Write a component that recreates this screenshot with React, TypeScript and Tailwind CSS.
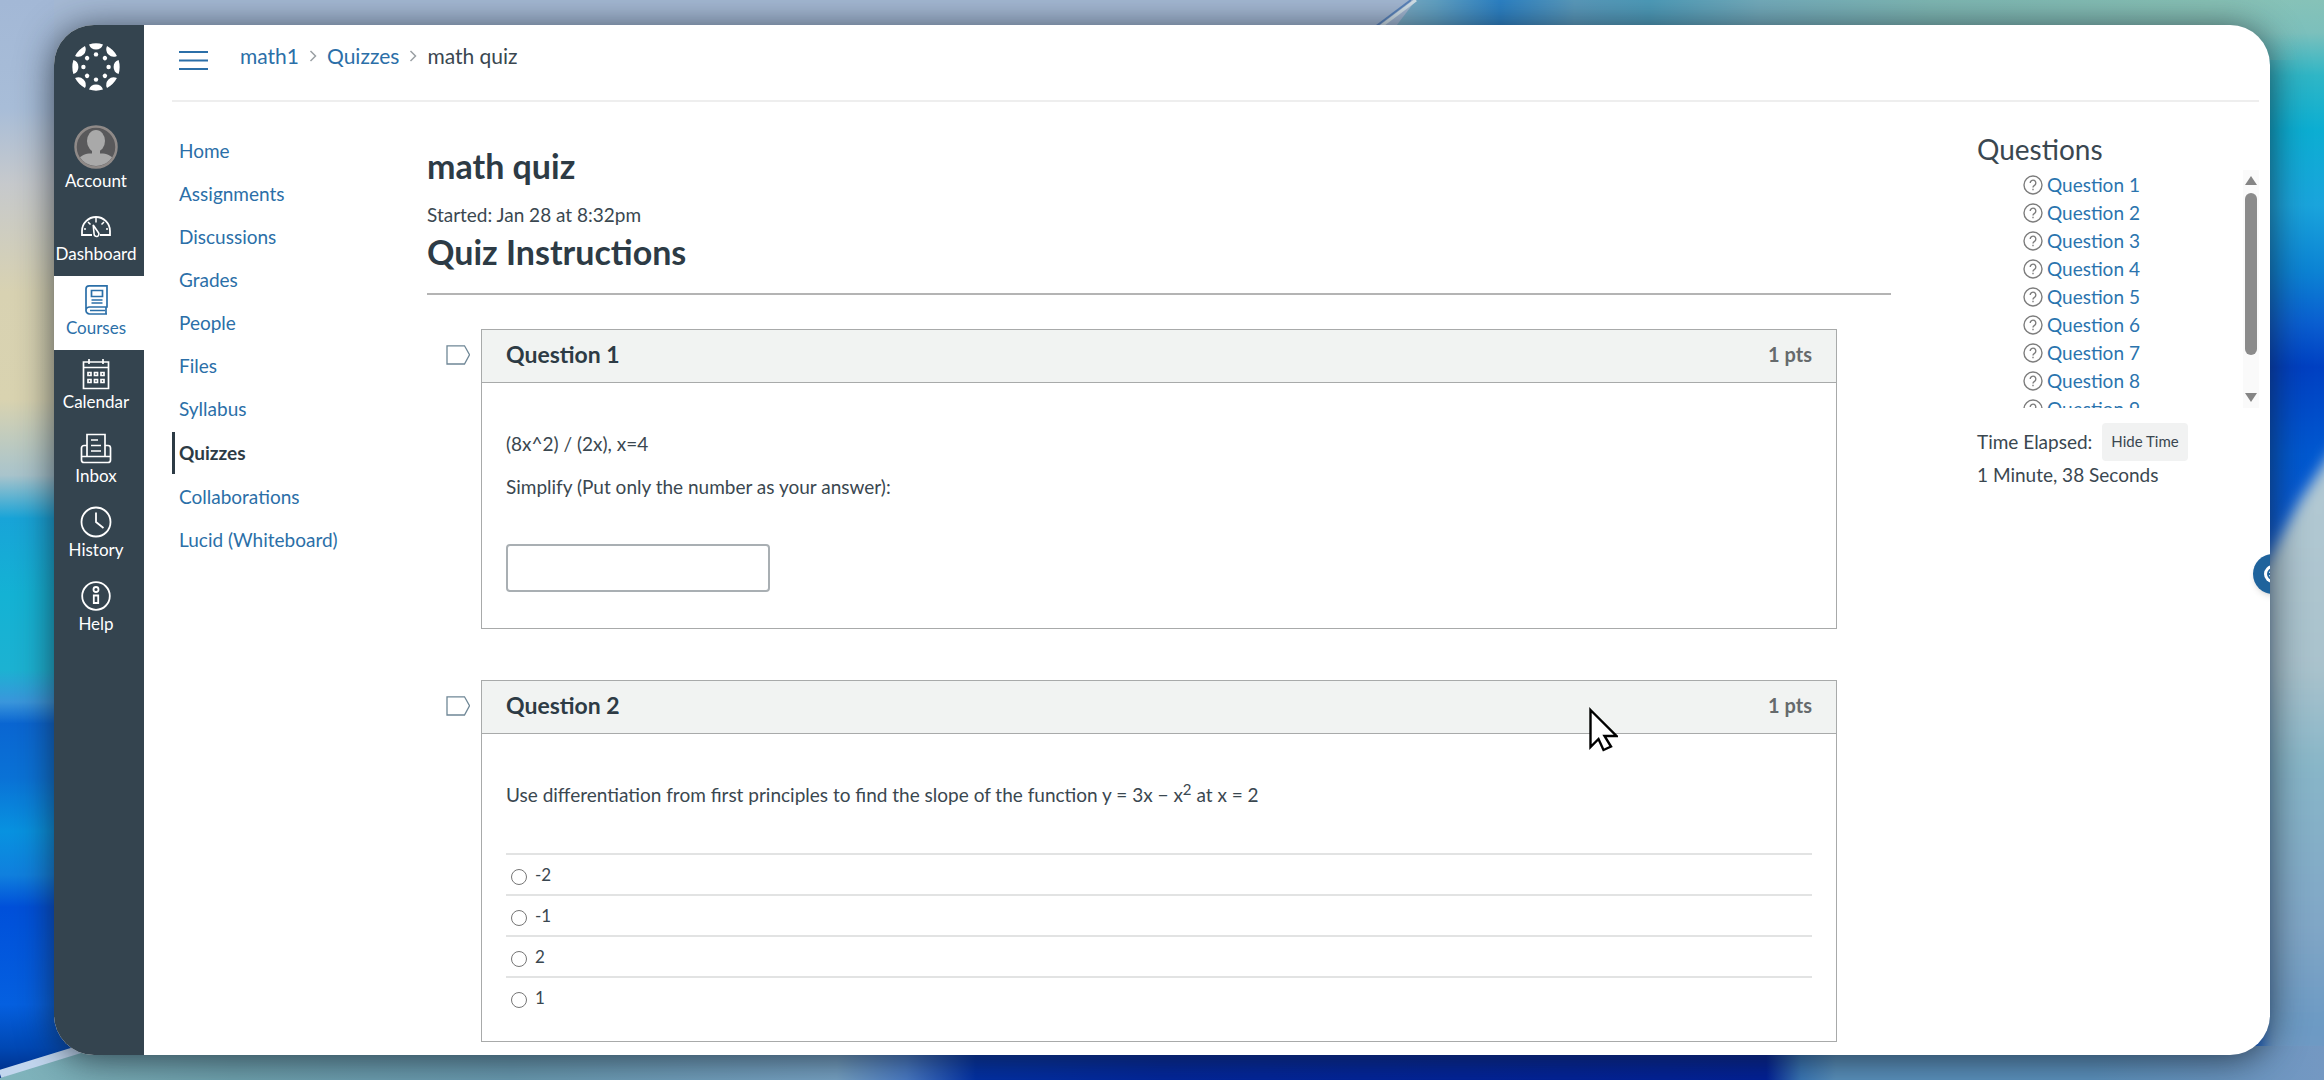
import React, { useState } from 'react';

const courseLinks = [
  'Home',
  'Assignments',
  'Discussions',
  'Grades',
  'People',
  'Files',
  'Syllabus',
  'Quizzes',
  'Collaborations',
  'Lucid (Whiteboard)',
];

const answers = ['-2', '-1', '2', '1'];

const CanvasLogo = () => (
  <svg viewBox="-24 -24 48 48" className="h-12 w-12" fill="#fff" aria-hidden="true">
    {[0, 45, 90, 135, 180, 225, 270, 315].map((angle) => (
      <g key={angle} transform={`rotate(${angle})`}>
        <path d="M-7 -22.6A24 24 0 0 1 7 -22.6A7.4 7.4 0 0 1 -7 -22.6Z" />
        <circle cy="-12.6" r="2.2" />
      </g>
    ))}
  </svg>
);

const AvatarIcon = () => (
  <svg viewBox="0 0 44 44" className="h-11 w-11" aria-hidden="true">
    <clipPath id="avatar-clip">
      <circle cx="22" cy="22" r="19" />
    </clipPath>
    <circle cx="22" cy="22" r="20.5" fill="#59595b" stroke="#8f8a88" strokeWidth="2.5" />
    <g fill="#a9a9a9" clipPath="url(#avatar-clip)">
      <ellipse cx="22" cy="16" rx="9" ry="11" />
      <path d="M18 24h8v5h-8z" />
      <path d="M2 44c0-11 6-14.500 13-15.500h14c7 1 13 4.500 13 15.500z" />
    </g>
  </svg>
);

const DashboardIcon = () => (
  <svg viewBox="0 0 32 24" className="h-6 w-8" fill="none" stroke="currentColor" strokeWidth="1.8" aria-hidden="true">
    <path d="M12 21H2v-4a14 14 0 0 1 28 0v4H20" />
    <path d="M16 3.500v5M8 8l2.500 2.500M24 8l-2.500 2.500M4 15h2M28 15h-2" strokeWidth="1.500" />
    <path d="M13.200 11l5.300 7.800a2.400 2.400 0 1 1-4.400 1.200z" strokeWidth="1.600" />
  </svg>
);

const CoursesIcon = () => (
  <svg viewBox="0 0 28 32" className="h-8 w-7" fill="none" stroke="currentColor" strokeWidth="1.700" aria-hidden="true">
    <path d="M4 27V5a3.200 3.200 0 0 1 3.200-3.200H25V23H7.500a3.500 3.500 0 0 0 0 7H25M24 23.500v6M8 26.500h15" />
    <path d="M9.500 6.500h11v6h-11zM9.500 16h11M9.500 19h11" />
  </svg>
);

const CalendarIcon = () => (
  <svg viewBox="0 0 28 32" className="h-8 w-7" fill="none" stroke="currentColor" strokeWidth="1.700" aria-hidden="true">
    <path d="M1.500 4h25v26.500h-25zM1.500 9.500h25M7 1v5M21 1v5" />
    <path d="M6 14.500h3v3H6zM12.500 14.500h3v3h-3zM19 14.500h3v3h-3zM6 21.500h3v3H6zM12.500 21.500h3v3h-3zM19 21.500h3v3h-3z" />
  </svg>
);

const InboxIcon = () => (
  <svg viewBox="0 0 32 32" className="h-8 w-8" fill="none" stroke="currentColor" strokeWidth="1.700" aria-hidden="true">
    <path d="M7 24V2.500h18V24M11 8h7M11 13.500h10M11 19h10" />
    <path d="M7 13.500H4a2.500 2.500 0 0 0-2.500 2.500v12A2.500 2.500 0 0 0 4 30.500h24a2.500 2.500 0 0 0 2.500-2.500V16a2.500 2.500 0 0 0-2.500-2.500h-3M2 24.500h28" />
  </svg>
);

const HistoryIcon = () => (
  <svg viewBox="0 0 32 32" className="h-8 w-8" fill="none" stroke="currentColor" strokeWidth="1.800" aria-hidden="true">
    <circle cx="16" cy="16" r="14.500" />
    <path d="M16 6.500V16l7.500 6" />
  </svg>
);

const HelpIcon = () => (
  <svg viewBox="0 0 32 32" className="h-8 w-8" fill="none" stroke="currentColor" strokeWidth="1.800" aria-hidden="true">
    <circle cx="16" cy="16" r="13.800" />
    <circle cx="16" cy="9.500" r="2.500" />
    <path d="M13.800 15.500h4.400v7.500h-4.400z" />
  </svg>
);

const navItems = [
  { name: 'Dashboard', icon: DashboardIcon },
  { name: 'Courses', icon: CoursesIcon },
  { name: 'Calendar', icon: CalendarIcon },
  { name: 'Inbox', icon: InboxIcon },
  { name: 'History', icon: HistoryIcon },
  { name: 'Help', icon: HelpIcon },
];

const Wallpaper = () => (
  <svg
    viewBox="0 0 2324 1080"
    preserveAspectRatio="none"
    className="absolute inset-0 h-full w-full"
    aria-hidden="true"
  >
    <defs>
      <linearGradient id="wp-left" x1="0" y1="0" x2="0" y2="1">
        <stop offset="0" stopColor="#a3b8d6" />
        <stop offset="0.1" stopColor="#a8bdd8" />
        <stop offset="0.17" stopColor="#c6c9cc" />
        <stop offset="0.27" stopColor="#d8d2b2" />
        <stop offset="0.37" stopColor="#d9d3b0" />
        <stop offset="0.44" stopColor="#a9c4cc" />
        <stop offset="0.48" stopColor="#18a4d8" />
        <stop offset="0.55" stopColor="#14b2d4" />
        <stop offset="0.62" stopColor="#1cb2d2" />
        <stop offset="0.65" stopColor="#3a96dc" />
        <stop offset="0.67" stopColor="#0a66d2" />
        <stop offset="0.72" stopColor="#0a72d6" />
        <stop offset="0.77" stopColor="#0892e0" />
        <stop offset="0.81" stopColor="#1080de" />
        <stop offset="0.84" stopColor="#0050da" />
        <stop offset="0.93" stopColor="#0560e0" />
        <stop offset="0.97" stopColor="#0048b4" />
        <stop offset="1" stopColor="#002a80" />
      </linearGradient>
      <linearGradient id="wp-right" x1="0" y1="0" x2="0" y2="1">
        <stop offset="0" stopColor="#86c2b8" />
        <stop offset="0.03" stopColor="#7cc0bc" />
        <stop offset="0.07" stopColor="#2fb6c6" />
        <stop offset="0.12" stopColor="#0caed2" />
        <stop offset="0.19" stopColor="#1aa4dc" />
        <stop offset="0.25" stopColor="#0c84d4" />
        <stop offset="0.3" stopColor="#0a5ed0" />
        <stop offset="0.34" stopColor="#0040c2" />
        <stop offset="0.42" stopColor="#0058d0" />
        <stop offset="0.5" stopColor="#0a5cd8" />
        <stop offset="1" stopColor="#0a5cd8" />
      </linearGradient>
      <linearGradient id="wp-glass" x1="0" y1="0" x2="0" y2="1">
        <stop offset="0" stopColor="#b4cad4" />
        <stop offset="0.35" stopColor="#a9c2cc" />
        <stop offset="0.5" stopColor="#88b6c8" />
        <stop offset="0.75" stopColor="#80a6c6" />
        <stop offset="0.9" stopColor="#6c9ac4" />
        <stop offset="1" stopColor="#7498c2" />
      </linearGradient>
      <linearGradient id="wp-top" x1="0" y1="0" x2="1" y2="0">
        <stop offset="0" stopColor="#8fb4c4" />
        <stop offset="0.07" stopColor="#62a2c4" />
        <stop offset="0.14" stopColor="#2c82c6" />
        <stop offset="0.22" stopColor="#5a9abc" />
        <stop offset="0.3" stopColor="#4e9cba" />
        <stop offset="0.42" stopColor="#74acbc" />
        <stop offset="0.6" stopColor="#7fb8b4" />
        <stop offset="0.9" stopColor="#88c2b6" />
        <stop offset="1" stopColor="#88c2b6" stopOpacity="0" />
      </linearGradient>
      <linearGradient id="wp-bottom" x1="0" y1="0" x2="1" y2="0">
        <stop offset="0" stopColor="#80b4bc" />
        <stop offset="0.1" stopColor="#70a4b0" />
        <stop offset="0.22" stopColor="#6a9cb2" />
        <stop offset="0.36" stopColor="#78a4c6" />
        <stop offset="0.39" stopColor="#4a7cc8" />
        <stop offset="0.42" stopColor="#0030a8" />
        <stop offset="0.5" stopColor="#0026a0" />
        <stop offset="0.76" stopColor="#00209a" />
        <stop offset="0.775" stopColor="#3a78b8" />
        <stop offset="0.79" stopColor="#5a92be" />
        <stop offset="0.9" stopColor="#5c92be" />
        <stop offset="1" stopColor="#7498c2" />
      </linearGradient>
      <filter id="wp-soft" x="-20%" y="-20%" width="140%" height="140%">
        <feGaussianBlur stdDeviation="7" />
      </filter>
    </defs>
    <rect width="1400" height="1080" fill="url(#wp-left)" />
    <rect y="0" x="54" width="1366" height="60" fill="#a5b9d4" />
    <rect x="1500" width="824" height="1080" fill="url(#wp-right)" />
    <path d="M1416 0H2300V60H1370z" fill="url(#wp-top)" />
    <path d="M1416 0L1376 30" stroke="#d4e2ea" strokeWidth="3" />
    <path d="M1411 0L1371 30" stroke="#5a84bc" strokeWidth="2" />
    <path d="M2340 440L2300 500L2262 570V1090H2340z" fill="url(#wp-glass)" filter="url(#wp-soft)" />
    <path d="M0 1078L84 1046H2324V1080H0z" fill="url(#wp-bottom)" />
    <path d="M0 1074L84 1048" stroke="#c2d6ee" strokeWidth="8" />
  </svg>
);

const FlagButton: React.FC<{ label: string }> = ({ label }) => (
  <button type="button" aria-label={label} className="mt-4 mr-[11px] h-5 w-6 shrink-0">
    <svg viewBox="0 0 24 20" className="h-5 w-6" fill="none" stroke="#6f8796" strokeWidth="1.300" aria-hidden="true">
      <path d="M1 .8h17.500l5 9-5 9.200H1z" />
    </svg>
  </button>
);

interface QuestionCardProps {
  title: string;
  children: React.ReactNode;
}

const QuestionCard: React.FC<QuestionCardProps> = ({ title, children }) => (
  <div className="flex items-start pr-[54px] pl-[19px]">
    <FlagButton label={`Flag ${title}`} />
    <section className="min-w-0 flex-1 border border-[#a8aaaa]">
      <div className="flex h-[53px] items-center justify-between border-b border-[#a8aaaa] bg-[#f1f3f2] px-6 pb-1">
        <h3 className="text-[23px] leading-7 font-bold text-[#2d3b45]">{title}</h3>
        <span className="text-[20px] leading-7 font-bold text-[#666a6c]">1 pts</span>
      </div>
      <div className="px-6 pt-[47px] text-[19px] leading-7">{children}</div>
    </section>
  </div>
);

const App = () => {
  const [showTime, setShowTime] = useState(true);
  const [choice, setChoice] = useState('');
  const [answer, setAnswer] = useState('');

  return (
    <div className="relative h-screen overflow-hidden px-[54px] py-[25px] font-[Lato,'Liberation_Sans',sans-serif] text-[#3a4750]">
      <Wallpaper />

      <div className="relative flex h-full overflow-hidden rounded-[40px] bg-white shadow-[0_4px_36px_rgba(20,30,40,0.75)]">
        {/* Global navigation */}
        <nav className="flex w-[90px] shrink-0 flex-col bg-[#34444f] text-white">
          <a href="#" aria-label="Canvas" className="mt-[18px] mb-8 flex justify-center pr-1.5">
            <CanvasLogo />
          </a>
          <a href="#" className="flex h-[79px] flex-col items-center gap-0.5 pt-[2px] pr-1.5 text-[17px] leading-5">
            <AvatarIcon />
            Account
          </a>
          {navItems.map((item) => {
            const Icon = item.icon;
            return (
              <a
                key={item.name}
                href="#"
                className={`flex h-[74px] flex-col items-center pt-2 pr-1.5 text-[17px] leading-5 ${
                  item.name === 'Courses' ? 'bg-white text-[#2b6fa8]' : 'text-white'
                }`}
              >
                <span className="mb-0.5 flex h-8 items-center">
                  <Icon />
                </span>
                {item.name}
              </a>
            );
          })}
        </nav>

        <div className="flex min-w-0 flex-1 flex-col pr-[11px] pl-7">
          {/* Breadcrumbs */}
          <header className="flex h-[77px] shrink-0 items-start border-b-2 border-[#eeeeee] pt-[17px] pl-[7px]">
            <button type="button" aria-label="Toggle course menu" className="mt-2 text-[#2b6fa8]">
              <svg viewBox="0 0 29 20" className="h-5 w-[29px]" stroke="currentColor" strokeWidth="2" aria-hidden="true">
                <path d="M0 2h29M0 10.500h29M0 19h29" />
              </svg>
            </button>
            <div className="ml-8 flex items-center text-[21px] leading-7">
              <a href="#" className="text-[#2b6fa8]">math1</a>
              <svg viewBox="0 0 8 12" className="mx-2.5 h-3 w-2" fill="none" stroke="#9aa0a4" strokeWidth="1.500" aria-hidden="true">
                <path d="M1.500 1l5 5-5 5" />
              </svg>
              <a href="#" className="text-[#2b6fa8]">Quizzes</a>
              <svg viewBox="0 0 8 12" className="mx-2.5 h-3 w-2" fill="none" stroke="#9aa0a4" strokeWidth="1.500" aria-hidden="true">
                <path d="M1.500 1l5 5-5 5" />
              </svg>
              <span>math quiz</span>
            </div>
          </header>

          <div className="flex min-h-0 flex-1">
            {/* Course menu */}
            <nav className="flex w-[255px] shrink-0 flex-col gap-px pt-7 text-[19px]">
              {courseLinks.map((name) => (
                <a
                  key={name}
                  href="#"
                  className={`flex h-[42px] items-center border-l-[3px] pl-1 ${
                    name === 'Quizzes'
                      ? 'my-px border-[#2d3b45] font-bold text-[#2d3b45]'
                      : 'border-transparent text-[#2b6fa8]'
                  }`}
                >
                  {name}
                </a>
              ))}
            </nav>

            {/* Quiz */}
            <main className="min-w-0 flex-1 pt-11">
              <h1 className="text-[34px] leading-10 font-bold text-[#2d3b45]">math quiz</h1>
              <p className="mt-[15px] text-[19px] leading-7">Started: Jan 28 at 8:32pm</p>
              <h2 className="mt-[3px] text-[34px] leading-10 font-bold text-[#2d3b45]">Quiz Instructions</h2>
              <hr className="mt-[21px] mb-[34px] border-t-2 border-[#b4b4b4]" />

              <QuestionCard title="Question 1">
                <p>(8x^2) / (2x), x=4</p>
                <p className="mt-[15px]">Simplify (Put only the number as your answer):</p>
                <input
                  type="text"
                  aria-label="Question 1 answer"
                  value={answer}
                  onChange={(e) => setAnswer(e.target.value)}
                  className="mt-[43px] mb-9 block h-12 w-[264px] rounded border-2 border-[#a9afb3] px-3"
                />
              </QuestionCard>

              <div className="h-[51px]" />

              <QuestionCard title="Question 2">
                <p>
                  Use differentiation from first principles to find the slope of the function y = 3x − x
                  <sup className="text-[15px]">2</sup> at x = 2
                </p>
                <div className="mt-11 mb-6">
                  {answers.map((value) => (
                    <label
                      key={value}
                      className="flex h-[41px] items-center border-t-2 border-[#e2e3e3] pl-[5px] text-[17px] leading-6"
                    >
                      <input
                        type="radio"
                        name="question-2"
                        value={value}
                        checked={choice === value}
                        onChange={() => setChoice(value)}
                        className="mt-1 mr-2 h-4 w-4 appearance-none rounded-full border border-[#767676] bg-white checked:border-[5px] checked:border-[#2b6fa8]"
                      />
                      {value}
                    </label>
                  ))}
                </div>
              </QuestionCard>
            </main>

            {/* Question list and timer */}
            <aside className="ml-[86px] w-[282px] shrink-0 pt-[31px]">
              <h2 className="text-[28px] leading-8">Questions</h2>
              <div className="mt-[5px] flex h-[238px] overflow-hidden">
                <ul className="flex-1 pt-px pl-[46px] text-[19px] leading-7">
                  {[1, 2, 3, 4, 5, 6, 7, 8, 9].map((n) => (
                    <li key={n} className="flex items-center gap-1">
                      <svg viewBox="0 0 20 20" className="h-5 w-5" fill="none" stroke="#7d7d7d" strokeWidth="1.400" aria-hidden="true">
                        <circle cx="10" cy="10" r="9" />
                        <path d="M7.200 8a2.800 2.800 0 1 1 4.300 2.300c-1 .6-1.500 1-1.500 2.100M10 13.800v1.500" />
                      </svg>
                      <a href="#" className="text-[#2b74ae]">Question {n}</a>
                    </li>
                  ))}
                </ul>
                <div className="flex w-4 flex-col items-center bg-[#fafafa] py-1.5">
                  <svg viewBox="0 0 12 9" className="h-[9px] w-3" fill="#858585" aria-hidden="true">
                    <path d="M6 0l6 9H0z" />
                  </svg>
                  <div className="mt-2 h-[162px] w-3 rounded-full bg-[#8b8b8b]" />
                  <svg viewBox="0 0 12 9" className="mt-auto h-[9px] w-3" fill="#858585" aria-hidden="true">
                    <path d="M6 9l6-9H0z" />
                  </svg>
                </div>
              </div>
              <div className="mt-[15px] flex items-center text-[19px] leading-7">
                <span>Time Elapsed:</span>
                <button
                  type="button"
                  onClick={() => setShowTime(!showTime)}
                  className="ml-2.5 h-[38px] rounded bg-[#f1f2f2] px-[9px] pb-0.5 text-[15px]"
                >
                  Hide Time
                </button>
              </div>
              {showTime && <div className="text-[19px] leading-7">1 Minute, 38 Seconds</div>}
            </aside>
          </div>
        </div>

        {/* Floating widget at the window edge */}
        <button
          type="button"
          aria-label="Open assistant"
          className="absolute top-[529px] -right-[23px] h-10 w-10 rounded-full bg-[#1f639c] shadow-md"
        >
          <svg viewBox="0 0 40 40" className="h-10 w-10" fill="none" aria-hidden="true">
            <circle cx="20" cy="20" r="9" fill="#fff" />
            <circle cx="20" cy="20" r="5" stroke="#1f639c" strokeWidth="2" />
            <path d="M16 20h6" stroke="#1f639c" strokeWidth="2" />
          </svg>
        </button>
      </div>

      {/* Pointer */}
      <svg
        viewBox="0 0 30 46"
        className="pointer-events-none absolute top-[706px] left-[1588px] h-[46px] w-[30px]"
        fill="#fff"
        stroke="#000"
        strokeWidth="2.400"
        aria-hidden="true"
      >
        <path d="M2.500 4L28.500 30H16.500L23 40.500l-7.500 3.500-5-11-8 8z" />
      </svg>
    </div>
  );
};

export default App;
